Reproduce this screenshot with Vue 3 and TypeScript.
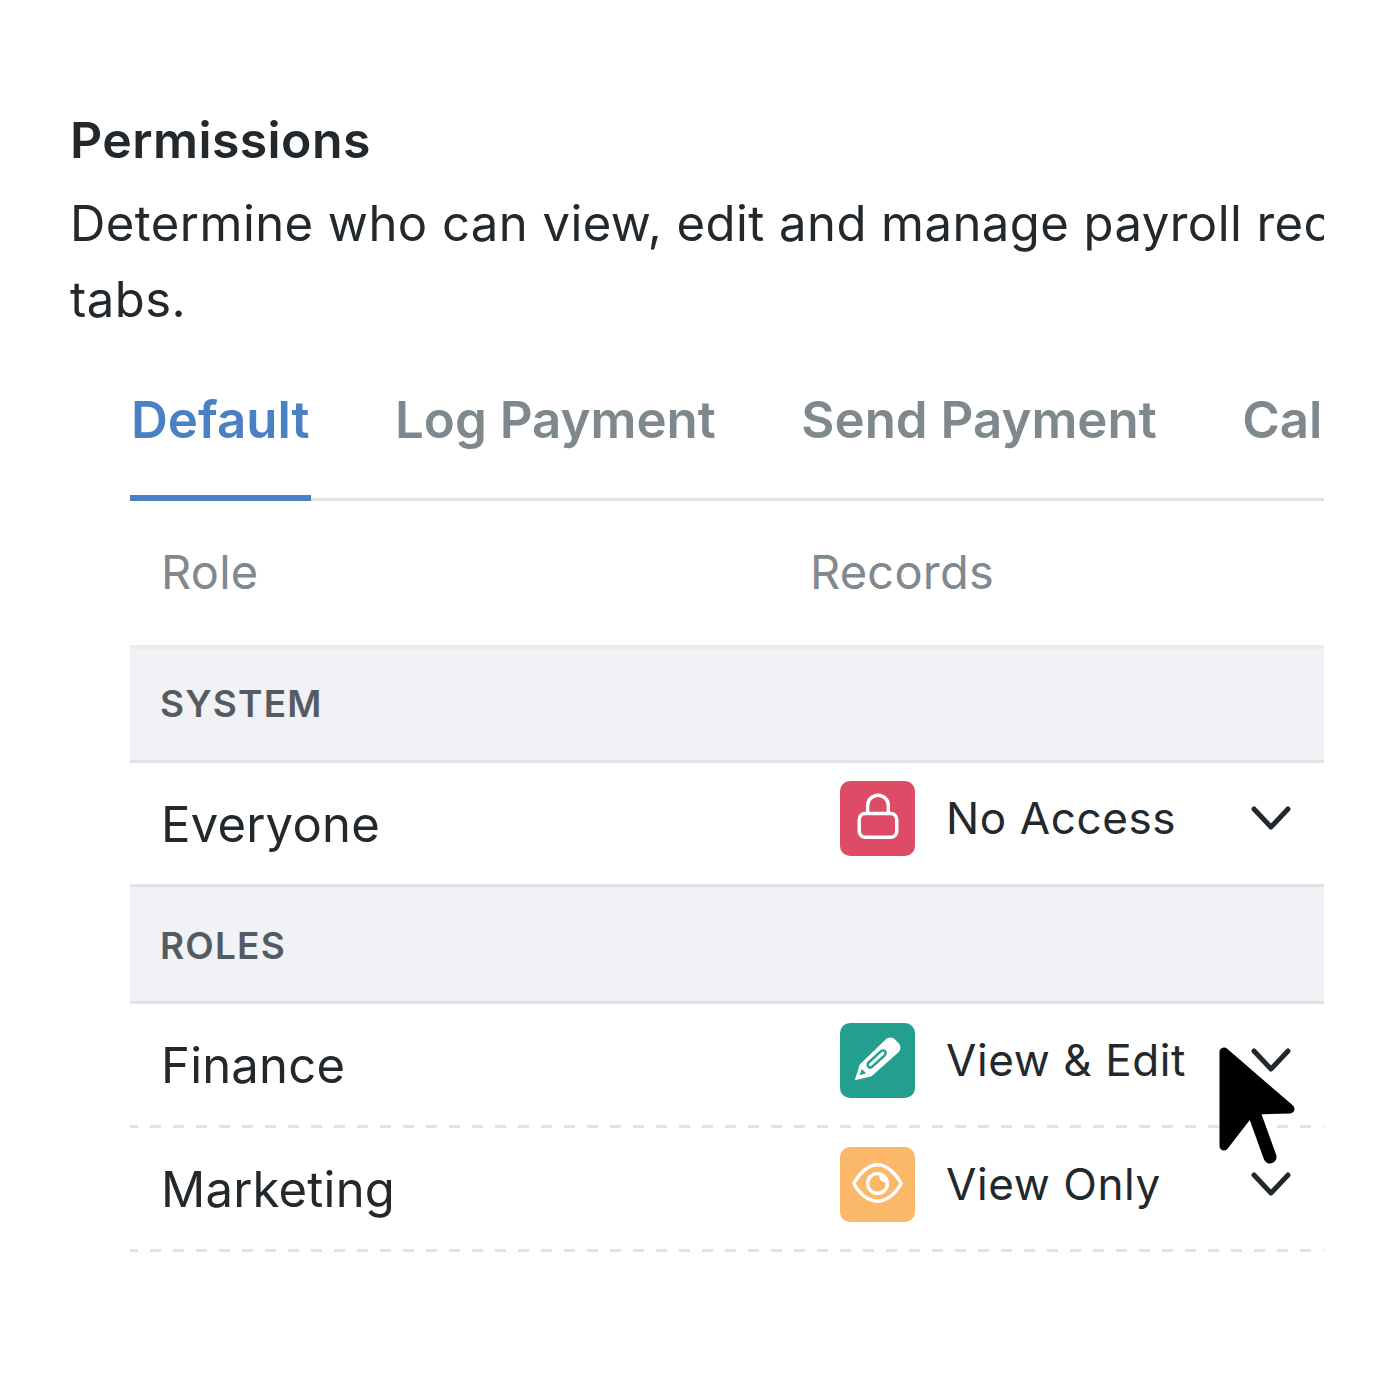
<script setup lang="ts">
interface Row { kind: 'group' | 'role'; name: string; access?: string; icon?: string; dashed?: boolean }
const tabs = ['Default', 'Log Payment', 'Send Payment', 'Calendar']
const rows: Row[] = [
  { kind: 'group', name: 'SYSTEM' },
  { kind: 'role', name: 'Everyone', access: 'No Access', icon: 'lock' },
  { kind: 'group', name: 'ROLES' },
  { kind: 'role', name: 'Finance', access: 'View & Edit', icon: 'edit', dashed: true },
  { kind: 'role', name: 'Marketing', access: 'View Only', icon: 'eye', dashed: true },
]
</script>

<template>
  <main class="page">
    <h2 class="title">Permissions</h2>
    <p class="desc">Determine who can view, edit and manage payroll records across these<br />tabs.</p>
    <section class="panel">
      <nav class="tabs">
        <span v-for="(t, i) in tabs" :key="t" class="tab" :class="{ active: i === 0 }">{{ t }}</span>
      </nav>
      <div class="head">
        <span class="col-role">Role</span>
        <span class="col-rec">Records</span>
      </div>
      <template v-for="r in rows" :key="r.name">
        <div v-if="r.kind === 'group'" class="group">{{ r.name }}</div>
        <div v-else class="row" :class="{ dashed: r.dashed }">
          <span class="role-name">{{ r.name }}</span>
          <div class="access">
            <span class="badge" :class="r.icon">
              <svg v-if="r.icon === 'lock'" viewBox="0 0 76 76" width="75" height="75" fill="none" stroke="#fff" stroke-width="3.500">
                <rect x="19.500" y="33" width="38" height="24" rx="6" />
                <path d="M28 33v-8a10.500 10.500 0 0 1 21 0v8" />
              </svg>
              <svg v-else-if="r.icon === 'edit'" viewBox="0 0 76 76" width="75" height="75">
                <path fill="#fff" d="M15 58l5-16 26-25c3-3 7-3 10 0l3 3c3 3 3 7 0 10L32 54z" />
                <path fill="none" stroke="#23a08d" stroke-width="2.500" d="M29 40l12-11c1.500-1.500 3.500-1.500 4.500-.5s1 3-.5 4.500L33 44c-1.500 1.500-3 1.500-4 .5s-1.500-3 0-4.500z" />
                <path fill="#23a08d" d="M20 53l2-6.500 4.500 4.500z" />
              </svg>
              <svg v-else viewBox="0 0 76 76" width="75" height="75" fill="none" stroke="#fff" stroke-width="3.500">
                <path d="M14 37C20 26 29 18 38 18S56 26 62 37C56 48 47 55 38 55S20 48 14 37z" />
                <circle cx="38" cy="37" r="10" />
                <path fill="#fff" stroke="none" d="M40 28a9 9 0 0 1 7 8 6.500 6.500 0 0 1-7-8z" />
              </svg>
            </span>
            <span class="access-label">{{ r.access }}</span>
            <svg class="chev" viewBox="0 0 40 26" width="40" height="26" fill="none" stroke="#22282c" stroke-width="5" stroke-linecap="round" stroke-linejoin="round">
              <path d="M3 4l17 18L37 4" />
            </svg>
          </div>
        </div>
      </template>
      <svg class="cursor" viewBox="0 0 80 122" width="80" height="122">
        <path fill="#000" stroke="#000" stroke-width="9" stroke-linejoin="round" d="M6 7V101L30 70L38 65L72 64Z" />
        <path fill="none" stroke="#000" stroke-width="13" stroke-linecap="round" d="M34 62L52 112" />
      </svg>
    </section>
  </main>
</template>

<style>
html, body { margin: 0; background: #fff; }
</style>

<style scoped>
.page {
  box-sizing: border-box;
  width: 1324px;
  height: 1400px;
  padding: 110px 0 0 70px;
  overflow: hidden;
  font-family: Inter, "Liberation Sans", sans-serif;
  color: #22282c;
}
.title {
  margin: 0;
  font-size: 50px;
  line-height: 60px;
  font-weight: 600;
  letter-spacing: 0.4px;
}
.desc {
  margin: 16px 0 0;
  font-size: 49px;
  line-height: 76px;
  letter-spacing: 0.45px;
  white-space: nowrap;
}
.panel {
  position: relative;
  width: 1194px;
  margin: 51px 0 0 60px;
}
.tabs {
  display: flex;
  gap: 83.5px;
  height: 109px;
  border-bottom: 3px solid #dfe3e6;
  white-space: nowrap;
}
.tab {
  box-sizing: border-box;
  height: 112px;
  padding: 0 1px;
  font-size: 51px;
  line-height: 62px;
  font-weight: 600;
  color: #7f888d;
}
.tab.active {
  color: #4a80c4;
  border-bottom: 6px solid #4a80c4;
}
.head {
  box-sizing: border-box;
  display: flex;
  align-items: center;
  height: 144px;
  padding: 0 0 4px 31px;
  font-size: 47px;
  letter-spacing: 0.2px;
  color: #81898e;
}
.col-role { width: 649px; }
.group {
  box-sizing: border-box;
  display: flex;
  align-items: center;
  height: 117.5px;
  padding: 0 0 2px 30px;
  background: #f0f2f5;
  border-top: 4px solid #e9ebee;
  border-bottom: 3px solid #dfe3e6;
  font-size: 37px;
  font-weight: 600;
  letter-spacing: 1.2px;
  color: #555c61;
}
.row + .group {
  padding-bottom: 0;
  border-top-color: #f0f2f5;
}
.row {
  box-sizing: border-box;
  display: flex;
  align-items: center;
  height: 124px;
  padding-left: 31px;
  border-bottom: 3px solid #dfe3e6;
}
.row.dashed {
  border-bottom-color: transparent;
  background-image: repeating-linear-gradient(90deg, #dfe3e6 0 8px, transparent 8px 20px, #dfe3e6 20px 23px);
  background-size: 100% 3px;
  background-position: left bottom;
  background-repeat: no-repeat;
  background-origin: border-box;
  background-clip: border-box;
}
.role-name {
  width: 679px;
  padding-top: 2px;
  font-size: 49px;
  letter-spacing: 0.2px;
}
.access {
  display: flex;
  align-items: center;
  flex: 1;
  margin-top: -10px;
}
.badge {
  display: flex;
  width: 75px;
  height: 75px;
  margin-top: 1px;
  border-radius: 10px;
}
.badge.lock { background: #de4b67; }
.badge.edit { background: #23a08d; }
.badge.eye { background: #fbb869; }
.access-label {
  flex: 1;
  margin-left: 31px;
  font-size: 44px;
  letter-spacing: 0.6px;
}
.chev { margin-right: 33px; }
.cursor {
  position: absolute;
  left: 1088px;
  top: 656px;
}
</style>
